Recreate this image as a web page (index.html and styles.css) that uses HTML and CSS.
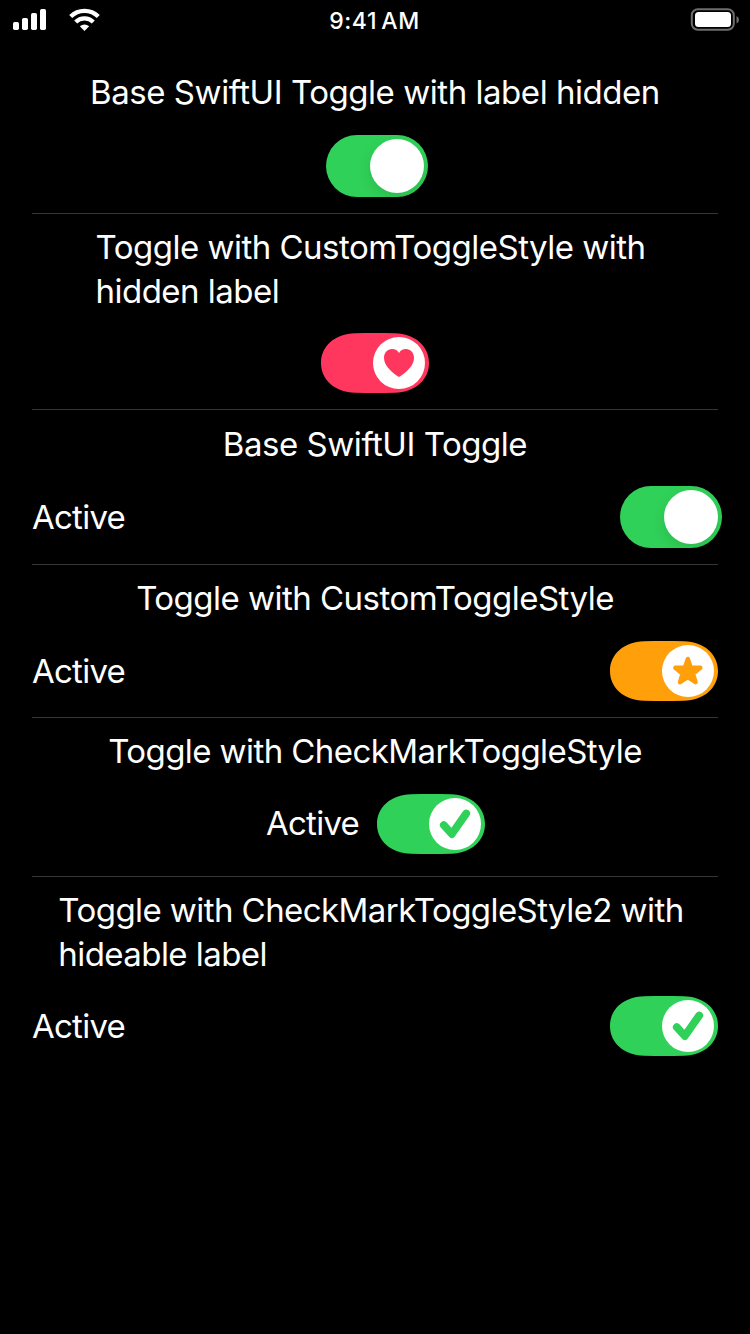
FILE: index.html
```html
<!DOCTYPE html>
<html lang="en">
<head>
<meta charset="utf-8">
<title>Toggles</title>
<link rel="stylesheet" href="styles.css">
</head>
<body>
<svg class="defs" width="0" height="0" aria-hidden="true">
  <defs>
    <path id="capsule" d="M34 .3C48 -.1 60 -.1 74 .3C94 .8 108 13 108 30S94 59.200 74 59.700C60 60.100 48 60.100 34 59.700C14 59.200 0 47 0 30S14 .8 34 .3Z"/>
    <path id="check" d="M66.800 31.200 74.800 40 89.200 19.500" fill="none" stroke="currentColor" stroke-width="7.800" stroke-linecap="round" stroke-linejoin="round"/>
  </defs>
</svg>
<header class="status">
  <div class="signals">
    <svg class="bars" width="34" height="22" viewBox="0 0 34 22" fill="#fff"><rect x="0" y="13" width="6" height="8" rx="1.7"/><rect x="9" y="9" width="6" height="12" rx="1.7"/><rect x="18" y="4" width="6" height="17" rx="1.7"/><rect x="27" y="0" width="6" height="21" rx="1.7"/></svg>
    <svg class="wifi" width="32" height="24" viewBox="0 0 32 24"><g fill="none" stroke="#fff" stroke-width="4.2"><path d="M1.700 8.600A19.400 19.400 0 0 1 29.300 8.600"/><path d="M6.700 14.100A12.400 12.400 0 0 1 24.300 14.100"/></g><path fill="#fff" d="M10.800 18.300Q15.500 14.500 20.200 18.300L15.500 23Z"/></svg>
  </div>
  <time class="clock">9:41 AM</time>
  <svg class="battery" width="50" height="24" viewBox="0 0 50 24"><rect x="1.800" y="1.200" width="42" height="20.600" rx="6" fill="none" stroke="#6d6d6d" stroke-width="2"/><rect x="5" y="4" width="36" height="15" rx="3.500" fill="#fff"/><path d="M46.500 8Q49 9 49 11.700T46.500 15.500Z" fill="#6d6d6d"/></svg>
</header>
<main>
  <section class="block first">
    <h2 class="title t1">Base SwiftUI Toggle with label hidden</h2>
    <div class="row center base"><span class="switch"><i class="knob"></i></span></div>
  </section>
  <section class="block second">
    <h2 class="title t2">Toggle with CustomToggleStyle with<br>hidden label</h2>
    <div class="row center"><svg class="custom pink" viewBox="0 0 108 60"><use href="#capsule" fill="currentColor"/><circle cx="78" cy="30" r="26" fill="#fff"/><path fill="currentColor" d="M78 44C73 41 63 33.500 63 25C63 19.500 66.500 16 71 16C74.200 16 76.700 17.500 78 20C79.300 17.500 81.800 16 85 16C89.500 16 93 19.500 93 25C93 33.500 83 41 78 44Z"/></svg></div>
  </section>
  <section class="block third">
    <h2 class="title t3">Base SwiftUI Toggle</h2>
    <div class="row spread base"><span class="label">Active</span><span class="switch"><i class="knob"></i></span></div>
  </section>
  <section class="block fourth">
    <h2 class="title t4">Toggle with CustomToggleStyle</h2>
    <div class="row spread"><span class="label">Active</span><svg class="custom orange" viewBox="0 0 108 60"><use href="#capsule" fill="currentColor"/><circle cx="78" cy="30" r="26" fill="#fff"/><path fill="currentColor" stroke="currentColor" stroke-width="4.400" stroke-linejoin="round" d="M77.800 17.900 80.700 26.400 90.300 26.800 83 32.700 85.600 41.200 77.800 36.200 70 41.200 72.600 32.700 65.300 26.800 74.900 26.400Z"/></svg></div>
  </section>
  <section class="block fifth">
    <h2 class="title t5">Toggle with CheckMarkToggleStyle</h2>
    <div class="row center"><span class="label">Active</span><svg class="custom green" viewBox="0 0 108 60"><use href="#capsule" fill="currentColor"/><circle cx="78" cy="30" r="26" fill="#fff"/><use href="#check"/></svg></div>
  </section>
  <section class="block last">
    <h2 class="title t6">Toggle with CheckMarkToggleStyle2 with<br>hideable label</h2>
    <div class="row spread"><span class="label">Active</span><svg class="custom green" viewBox="0 0 108 60"><use href="#capsule" fill="currentColor"/><circle cx="78" cy="30" r="26" fill="#fff"/><use href="#check"/></svg></div>
  </section>
</main>
</body>
</html>
```
FILE: styles.css
```css
* { box-sizing: border-box; }
body { margin: 0; height: 1334px; background: #000; color: #fff; font-family: Inter, "Liberation Sans", sans-serif; overflow: hidden; }
.defs { display: none; }
.status { height: 40px; display: grid; grid-template-columns: 1fr auto 1fr; align-items: center; padding: 0 10px 0 13px; }
.signals { display: flex; align-items: center; gap: 22px; }
.clock { height: 40px; padding: 2px 4px 0 0; font-size: 23px; font-weight: 550; line-height: 38px; letter-spacing: .6px; word-spacing: -2.500px; }
.battery { justify-self: end; }
main { padding: 0 32px; }
.block { display: flex; flex-direction: column; align-items: center; gap: 20px; padding-top: 11px; border-bottom: 1px solid #363638; }
.title { margin: 0; font-size: 33px; font-weight: 400; line-height: 44px; letter-spacing: -.46px; white-space: nowrap; }
.t2 { margin-right: 9px; letter-spacing: -.51px; }
.t4 { letter-spacing: -.52px; }
.t5 { letter-spacing: -.58px; }
.t6 { margin-right: 8px; letter-spacing: -.57px; }
.row { display: flex; align-items: center; width: 100%; height: 60px; }
.center { justify-content: center; gap: 17px; }
.spread { justify-content: space-between; }
.base { height: 62px; }
.label { font-size: 33px; line-height: 44px; letter-spacing: -.75px; }
.first { height: 174px; padding-top: 30px; gap: 21px; }
.second { height: 196px; }
.third { height: 155px; padding-top: 12px; }
.fourth { height: 153px; gap: 21px; }
.fifth { height: 159px; gap: 21px; }
.fifth .row { gap: 18px; }
.fifth .label { padding: 0 0 2px 1px; }
.last { border-bottom: 0; }
.first .row { padding-left: 4px; }
.third .switch { margin-right: -4px; }
.switch { width: 102px; height: 62px; border-radius: 31px; background: #30d158; padding: 4px; display: flex; justify-content: flex-end; overflow: hidden; }
.knob { width: 54px; height: 54px; border-radius: 50%; background: #fff; box-shadow: 0 5px 14px rgba(0, 0, 0, .11); }
.custom { width: 108px; height: 60px; flex: none; }
.pink { color: #ff375f; }
.orange { color: #ff9f0a; }
.green { color: #30d158; }
```
